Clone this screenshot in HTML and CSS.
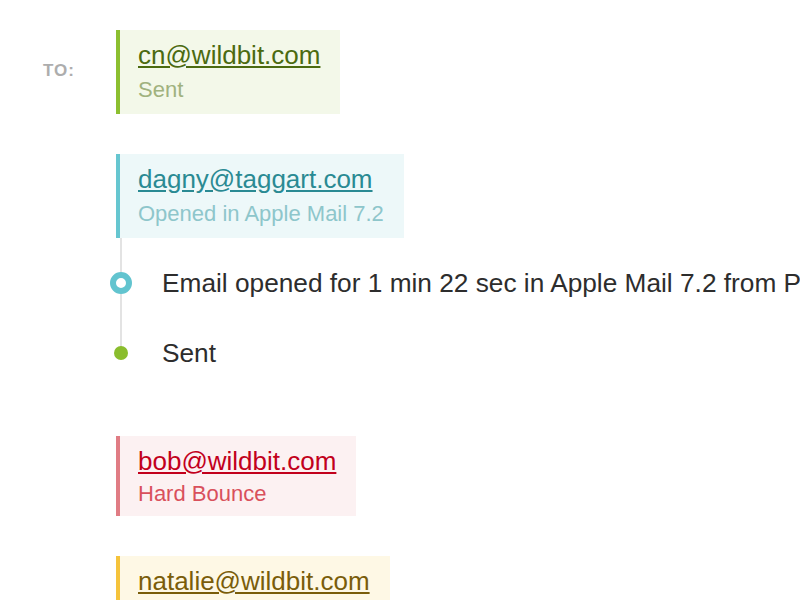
FILE: index.html
```html
<!DOCTYPE html>
<html lang="en">

<head>
    <meta charset="UTF-8">
    <meta name="viewport" content="width=device-width, initial-scale=1.0">
    <title>Message recipients</title>
    <link rel="stylesheet" href="styles.css">
</head>

<body>

    <div class="recipients">
        <div class="recipients-label">TO:</div>

        <!-- sent -->
        <div class="recipient">
            <div class="card card--sent">
                <a class="card-email" href="#">cn@wildbit.com</a>
                <div class="card-status">Sent</div>
            </div>
        </div>

        <!-- opened, with timeline -->
        <div class="recipient">
            <div class="card card--opened">
                <a class="card-email" href="#">dagny@taggart.com</a>
                <div class="card-status">Opened in Apple Mail 7.2</div>
            </div>
            <ul class="timeline">
                <li class="event">
                    <span class="event-marker event-marker--open"></span>
                    <span class="event-text">Email opened for 1 min 22 sec in Apple Mail 7.2 from Philadelphia, PA</span>
                </li>
                <li class="event">
                    <span class="event-marker event-marker--sent"></span>
                    <span class="event-text">Sent</span>
                </li>
            </ul>
        </div>

        <!-- bounced -->
        <div class="recipient">
            <div class="card card--bounced">
                <a class="card-email" href="#">bob@wildbit.com</a>
                <div class="card-status">Hard Bounce</div>
            </div>
        </div>

        <!-- queued -->
        <div class="recipient">
            <div class="card card--queued">
                <a class="card-email" href="#">natalie@wildbit.com</a>
            </div>
        </div>
    </div>

</body>

</html>
```

FILE: styles.css
```css
*,
*::before,
*::after {
    padding: 0;
    margin: 0;
    list-style: none;
    box-sizing: border-box;
}

html,
body {
    overflow: hidden;
}

body {
    background-color: #fff;
    font-family: "Liberation Sans", Arial, sans-serif;
    color: #2d2d2d;
}

.recipients {
    display: grid;
    grid-template-columns: 116px auto;
    row-gap: 40px;
    padding-top: 30px;
}

.recipients-label {
    grid-column: 1;
    grid-row: 1;
    align-self: center;
    padding-left: 43px;
    padding-bottom: 2px;
    font-size: 17px;
    font-weight: bold;
    letter-spacing: 1px;
    color: #adadad;
}

.recipient {
    grid-column: 2;
    display: flex;
    flex-direction: column;
    align-items: flex-start;
    min-width: 0;
}

/* 卡片 */
.card {
    padding: 7px 20px 7px 18px;
    border-left: 4px solid #ccc;
}

.card-email {
    display: block;
    font-size: 26px;
    line-height: 36px;
    white-space: nowrap;
}

.card-status {
    font-size: 22px;
    line-height: 34px;
    white-space: nowrap;
}

.card--sent {
    border-color: #8cbf30;
    background-color: #f3f8e9;
}

.card--sent .card-email {
    color: #4b6a10;
}

.card--sent .card-status {
    color: #a0b27e;
}

.card--opened {
    border-color: #66c6d0;
    background-color: #edf8f9;
}

.card--opened .card-email {
    color: #2a8a93;
}

.card--opened .card-status {
    color: #8ec6cb;
}

.card--bounced {
    border-color: #e07c84;
    background-color: #fcf1f2;
}

.card--bounced .card-email {
    color: #c2001c;
}

.card--bounced .card-status {
    color: #d9505c;
    line-height: 30px;
}

.card--queued {
    border-color: #f5c33b;
    background-color: #fef8e5;
}

.card--queued .card-email {
    color: #7a5d0a;
}

/* 时间线 */
.timeline {
    position: relative;
    padding: 10px 0 8px;
}

.timeline::before {
    content: "";
    position: absolute;
    left: 4px;
    top: 0;
    bottom: 43px;
    width: 2px;
    background-color: #e3e3e3;
}

.event {
    display: flex;
    align-items: center;
    gap: 36px;
    height: 70px;
}

.event-marker {
    position: relative;
    flex: none;
    width: 10px;
    display: flex;
    justify-content: center;
}

.event-marker::after {
    content: "";
    display: block;
    flex: none;
    border-radius: 50%;
}

.event-marker--open::after {
    width: 22px;
    height: 22px;
    border: 6px solid #62c4cf;
    background-color: #fff;
}

.event-marker--sent::after {
    width: 14px;
    height: 14px;
    background-color: #8abd2d;
}

.event-text {
    font-size: 26.25px;
    white-space: nowrap;
}
```
